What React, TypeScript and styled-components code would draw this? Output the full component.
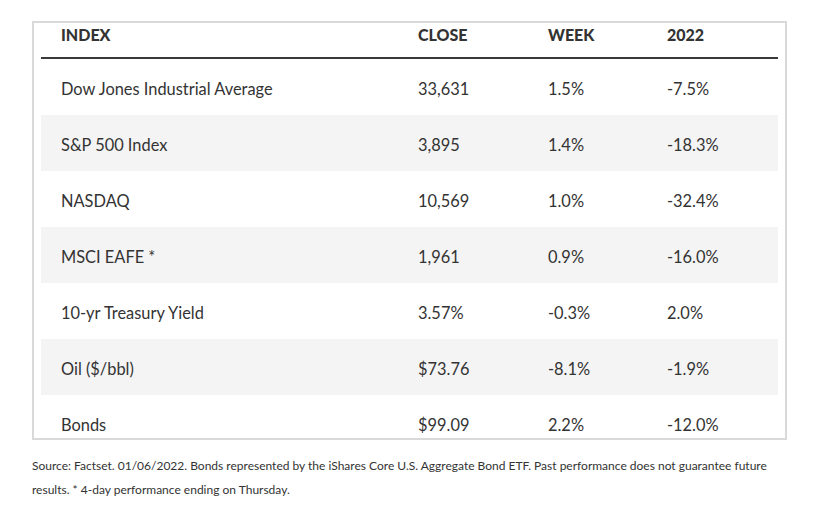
import React from 'react';
import styled, { createGlobalStyle } from 'styled-components';

const GlobalStyle = createGlobalStyle`
  body {
    margin: 0;
    background: #fff;
    font-family: Lato, 'Open Sans', sans-serif;
    color: #333;
  }
`;

const Page = styled.div`
  padding: 21px 0 0 32px;
  width: 814px;
  height: 510px;
  box-sizing: border-box;
`;

const TableBox = styled.div`
  width: 755px;
  height: 419px;
  box-sizing: border-box;
  border: 2px solid #d9d9d9;
  padding: 0 7px;
  overflow: hidden;
`;

const Row = styled.div<{ $striped?: boolean }>`
  display: grid;
  grid-template-columns: 357px 130px 119px 1fr;
  align-items: center;
  height: 56px;
  padding-left: 20px;
  padding-top: 3px;
  background: ${(p) => (p.$striped ? '#f4f4f4' : 'transparent')};
  font-size: 16.4px;
  line-height: 20px;
  box-sizing: border-box;
`;

const HeadRow = styled(Row)`
  height: 36px;
  padding-top: 2px;
  align-items: start;
  border-bottom: 2px solid #3a3a3a;
  font-weight: 900;
  font-size: 16px;
`;

const Cell = styled.div`
  white-space: nowrap;
`;

const Note = styled.p`
  margin: 14px 0 0 0;
  width: 760px;
  font-size: 12px;
  line-height: 24px;
  color: #333;
`;

const rows = [
  ['Dow Jones Industrial Average', '33,631', '1.5%', '-7.5%'],
  ['S&P 500 Index', '3,895', '1.4%', '-18.3%'],
  ['NASDAQ', '10,569', '1.0%', '-32.4%'],
  ['MSCI EAFE *', '1,961', '0.9%', '-16.0%'],
  ['10-yr Treasury Yield', '3.57%', '-0.3%', '2.0%'],
  ['Oil ($/bbl)', '$73.76', '-8.1%', '-1.9%'],
  ['Bonds', '$99.09', '2.2%', '-12.0%'],
];

const App: React.FC = () => {
  return (
    <Page>
      <GlobalStyle />
      <TableBox>
        <HeadRow>
          <Cell>INDEX</Cell>
          <Cell>CLOSE</Cell>
          <Cell>WEEK</Cell>
          <Cell>2022</Cell>
        </HeadRow>
        {rows.map((r, i) => (
          <Row key={r[0]} $striped={i % 2 === 1}>
            {r.map((c, j) => (
              <Cell key={j}>{c}</Cell>
            ))}
          </Row>
        ))}
      </TableBox>
      <Note>
        Source: Factset. 01/06/2022. Bonds represented by the iShares Core U.S. Aggregate Bond ETF. Past
        performance does not guarantee future results. * 4-day performance ending on Thursday.
      </Note>
    </Page>
  );
};

export default App;
